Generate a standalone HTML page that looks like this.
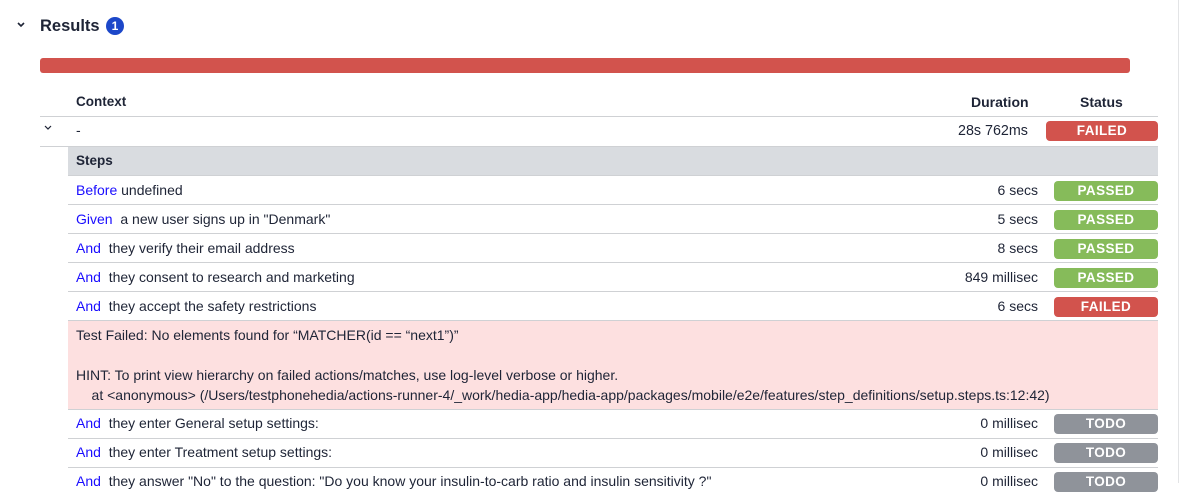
<!DOCTYPE html>
<html><head><style>
*{margin:0;padding:0;box-sizing:border-box}
body{width:1193px;height:483px;overflow:hidden;background:#fff;font-family:"Liberation Sans",sans-serif;color:#1e2436;font-size:14px;position:relative}
.a{position:absolute}
.line{position:absolute;height:1px;background:#cfd1d4}
.row{position:absolute;left:68px;width:1090px;height:29px}
.row .t{position:absolute;left:8px;top:6px;white-space:nowrap}
.row .d{position:absolute;right:120px;top:6px}
.b{position:absolute;right:0;top:5px;width:104px;height:20px;border-radius:4px;color:#fff;font-weight:bold;font-size:13.5px;text-align:center;line-height:20px;letter-spacing:.4px}
.p{background:#86bb5a}.f{background:#d2534d}.o{background:#8f939a}
.k{color:#1a0dff}
</style></head><body>
<div class="a" style="left:1178px;top:0;width:1px;height:483px;background:#e3e4e6"></div>
<svg class="a" style="left:16px;top:21px" width="10" height="8"><path d="M2 2 L5 5 L8 2" stroke="#1e2436" stroke-width="1.6" fill="none"/></svg>
<div class="a" style="left:40px;top:17px;font-size:16.5px;font-weight:bold">Results</div>
<div class="a" style="left:106px;top:17px;width:18px;height:18px;border-radius:50%;background:#1c47c9;color:#fff;font-size:12px;font-weight:bold;text-align:center;line-height:18px">1</div>
<div class="a" style="left:40px;top:58px;width:1090px;height:15px;border-radius:3px;background:#d2534d"></div>
<div class="a" style="left:76px;top:94px;font-weight:bold;font-size:13.5px">Context</div>
<div class="a" style="left:971px;top:94px;font-weight:bold;font-size:14px">Duration</div>
<div class="a" style="left:1080px;top:94px;font-weight:bold;font-size:14px">Status</div>
<div class="line" style="left:40px;top:116px;width:1118px"></div>
<svg class="a" style="left:44px;top:125px" width="8" height="6"><path d="M1 1 L4 4 L7 1" stroke="#1e2436" stroke-width="1.2" fill="none"/></svg>
<div class="a" style="left:76px;top:122px">-</div>
<div class="a" style="left:958px;top:123px;font-size:14.3px">28s 762ms</div>
<div class="b f" style="left:1046px;top:121px;width:112px">FAILED</div>
<div class="line" style="left:40px;top:146px;width:1118px"></div>
<div class="a" style="left:68px;top:147px;width:1090px;height:29px;background:#d9dce0;border-bottom:1px solid #cfd1d4"></div>
<div class="a" style="left:76px;top:153px;font-weight:bold;font-size:13.5px">Steps</div>
<div class="row" style="top:176px"><div class="t"><span class="k">Before</span> undefined</div><div class="d">6 secs</div><div class="b p">PASSED</div></div>
<div class="line" style="left:68px;top:204px;width:1090px"></div>
<div class="row" style="top:205px"><div class="t"><span class="k">Given</span>&nbsp; a new user signs up in "Denmark"</div><div class="d">5 secs</div><div class="b p">PASSED</div></div>
<div class="line" style="left:68px;top:233px;width:1090px"></div>
<div class="row" style="top:234px"><div class="t"><span class="k">And</span>&nbsp; they verify their email address</div><div class="d">8 secs</div><div class="b p">PASSED</div></div>
<div class="line" style="left:68px;top:262px;width:1090px"></div>
<div class="row" style="top:263px"><div class="t"><span class="k">And</span>&nbsp; they consent to research and marketing</div><div class="d">849 millisec</div><div class="b p">PASSED</div></div>
<div class="line" style="left:68px;top:291px;width:1090px"></div>
<div class="row" style="top:292px"><div class="t"><span class="k">And</span>&nbsp; they accept the safety restrictions</div><div class="d">6 secs</div><div class="b f">FAILED</div></div>
<div class="line" style="left:68px;top:320px;width:1090px"></div>
<div class="a" style="left:68px;top:321px;width:1090px;height:88px;background:#fde0e0;padding:4px 8px;line-height:20px;white-space:pre">Test Failed: No elements found for “MATCHER(id == “next1”)”

HINT: To print view hierarchy on failed actions/matches, use log-level verbose or higher.
    at &lt;anonymous&gt; (/Users/testphonehedia/actions-runner-4/_work/hedia-app/hedia-app/packages/mobile/e2e/features/step_definitions/setup.steps.ts:12:42)</div>
<div class="line" style="left:68px;top:409px;width:1090px"></div>
<div class="row" style="top:409px"><div class="t"><span class="k">And</span>&nbsp; they enter General setup settings:</div><div class="d">0 millisec</div><div class="b o">TODO</div></div>
<div class="line" style="left:68px;top:438px;width:1090px"></div>
<div class="row" style="top:438px"><div class="t"><span class="k">And</span>&nbsp; they enter Treatment setup settings:</div><div class="d">0 millisec</div><div class="b o">TODO</div></div>
<div class="line" style="left:68px;top:467px;width:1090px"></div>
<div class="row" style="top:467px"><div class="t"><span class="k">And</span>&nbsp; they answer "No" to the question: "Do you know your insulin-to-carb ratio and insulin sensitivity ?"</div><div class="d">0 millisec</div><div class="b o">TODO</div></div>
</body></html>
